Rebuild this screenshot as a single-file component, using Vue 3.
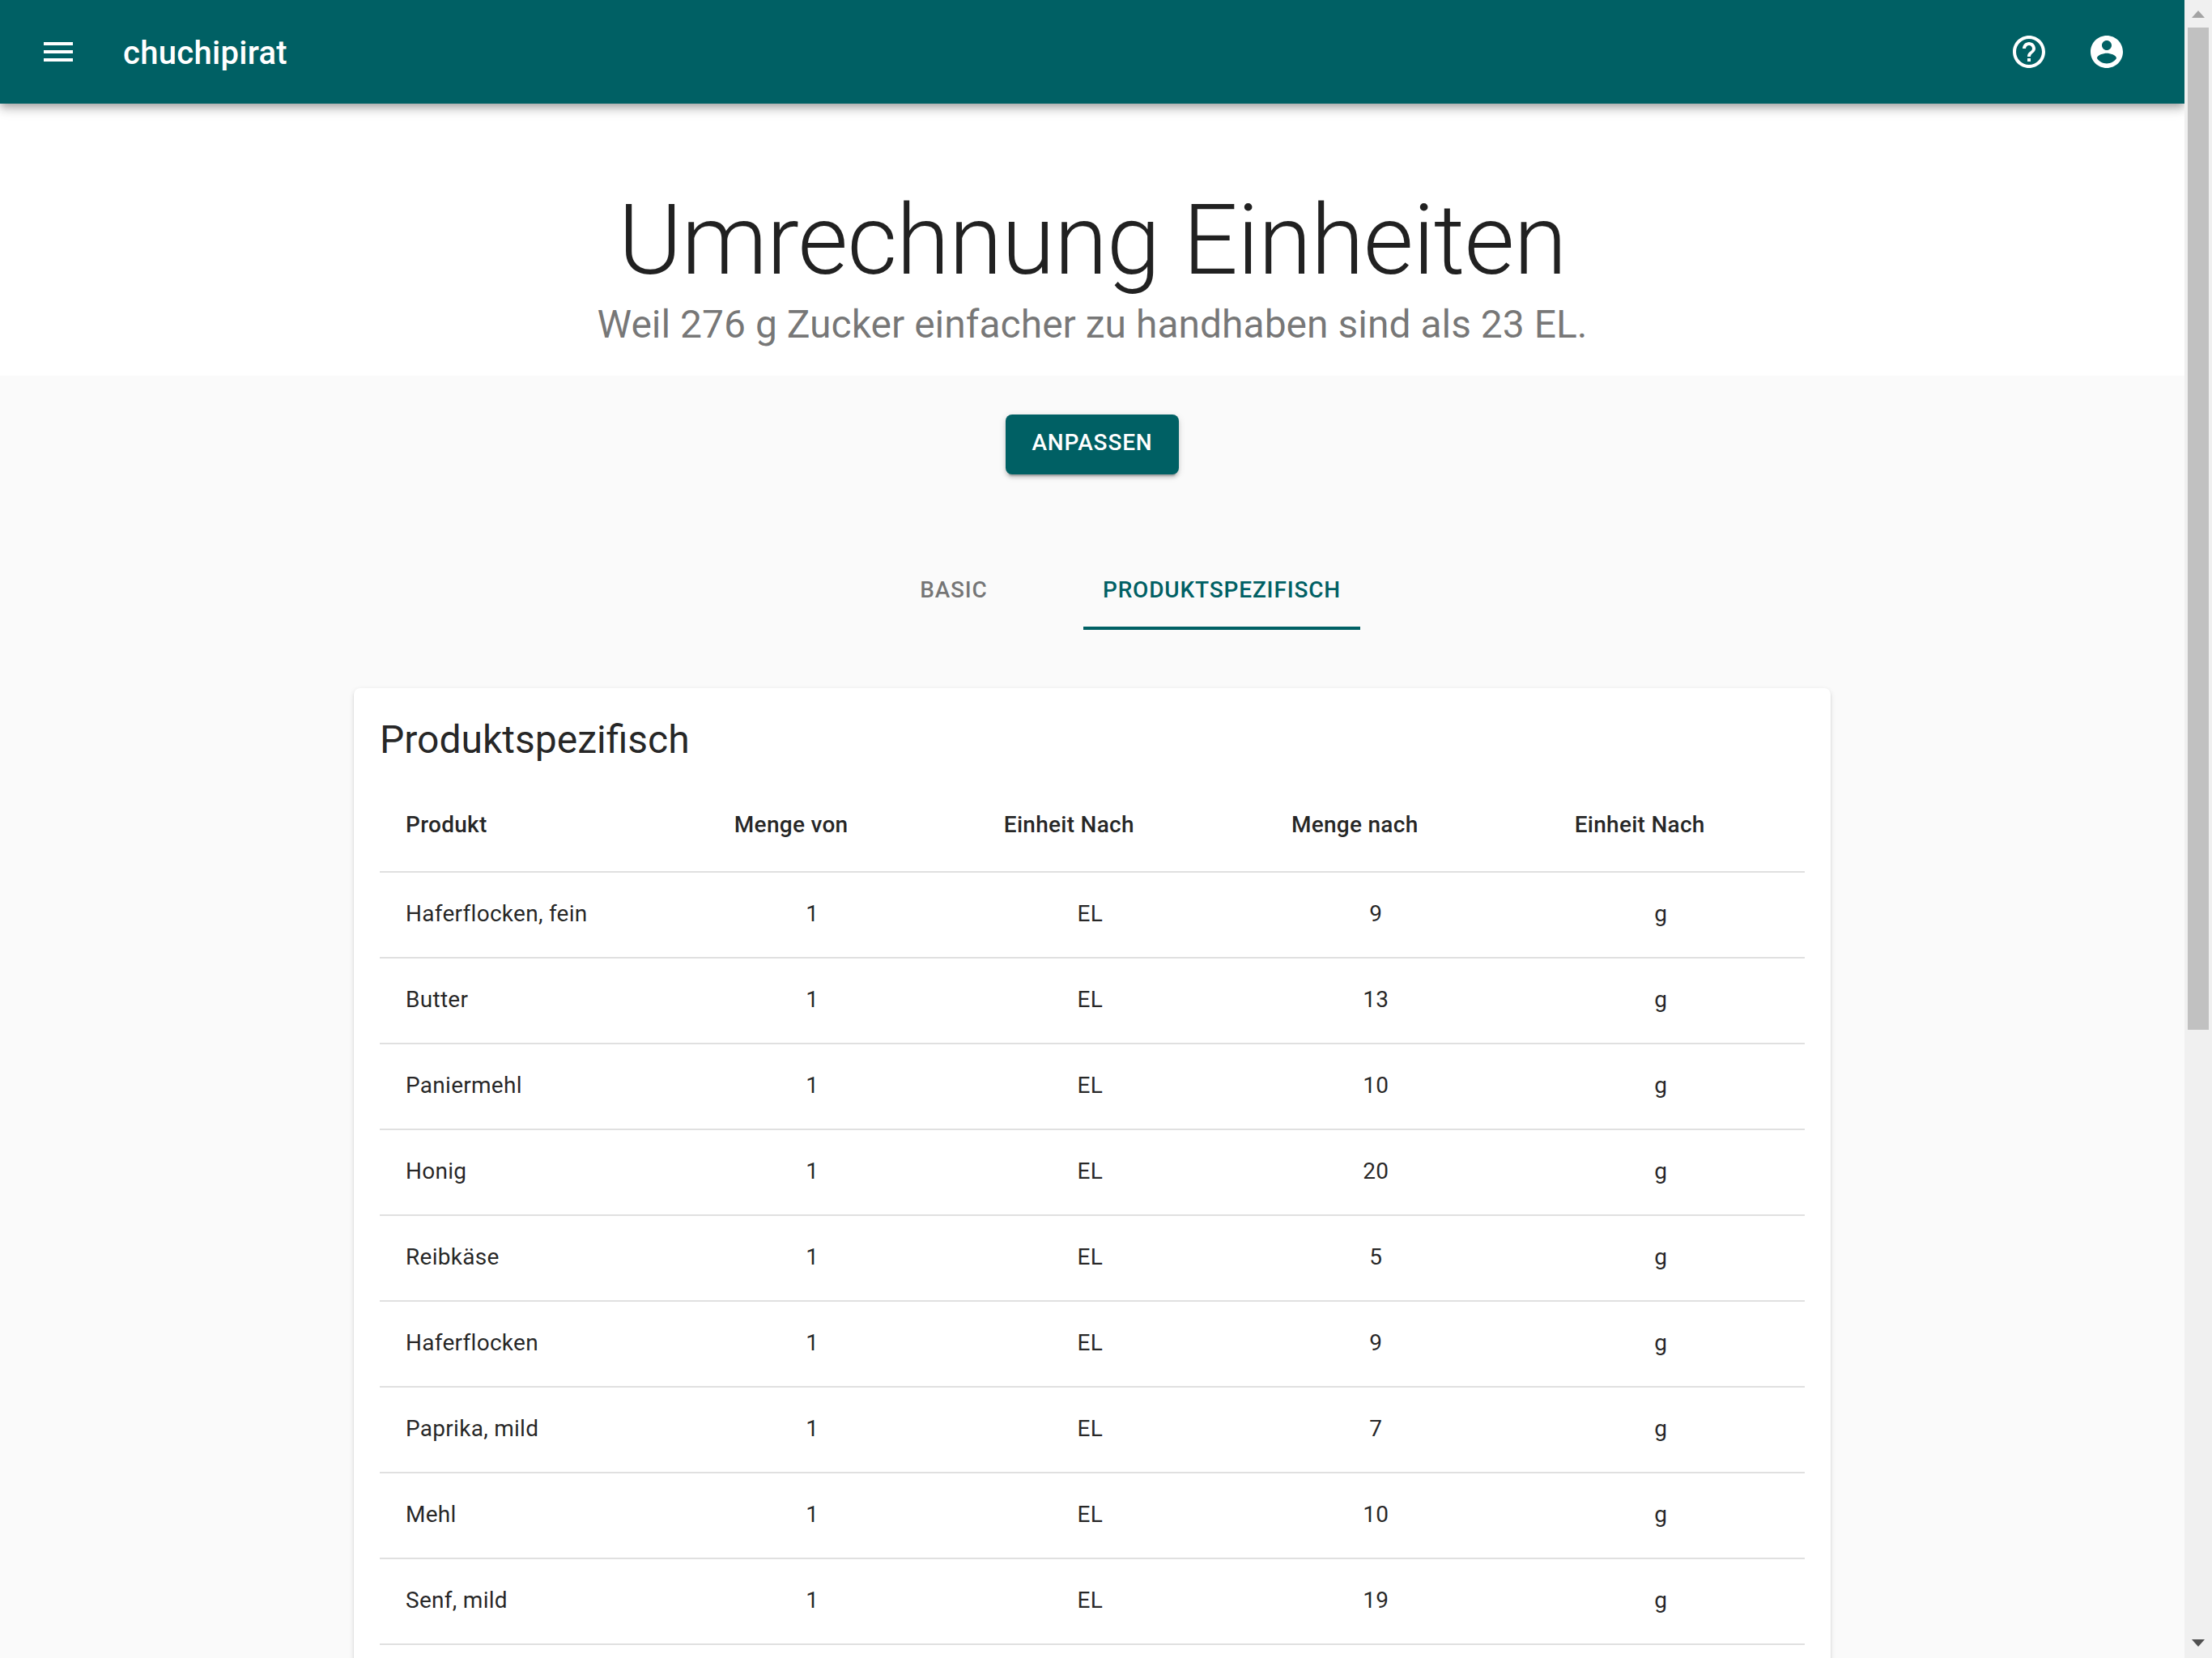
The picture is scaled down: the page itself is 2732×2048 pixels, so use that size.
<script setup>
import { ref } from 'vue'

const tabs = ['Basic', 'Produktspezifisch']
const activeTab = ref('Produktspezifisch')

const columns = ['Produkt', 'Menge von', 'Einheit Nach', 'Menge nach', 'Einheit Nach']

const rows = [
  ['Haferflocken, fein', 1, 'EL', 9, 'g'],
  ['Butter', 1, 'EL', 13, 'g'],
  ['Paniermehl', 1, 'EL', 10, 'g'],
  ['Honig', 1, 'EL', 20, 'g'],
  ['Reibkäse', 1, 'EL', 5, 'g'],
  ['Haferflocken', 1, 'EL', 9, 'g'],
  ['Paprika, mild', 1, 'EL', 7, 'g'],
  ['Mehl', 1, 'EL', 10, 'g'],
  ['Senf, mild', 1, 'EL', 19, 'g'],
]
</script>

<template>
  <div class="window">
    <div class="page">
      <header class="app-bar">
        <button class="icon-button" type="button" aria-label="Menü">
          <svg class="icon" viewBox="0 0 24 24"><path d="M3 18h18v-2H3v2zm0-5h18v-2H3v2zm0-7v2h18V6H3z" /></svg>
        </button>
        <span class="brand">chuchipirat</span>
        <button class="icon-button" type="button" aria-label="Hilfe">
          <svg class="icon" viewBox="0 0 24 24"><path d="M11 18h2v-2h-2v2zm1-16C6.48 2 2 6.48 2 12s4.480 10 10 10 10-4.480 10-10S17.520 2 12 2zm0 18c-4.410 0-8-3.590-8-8s3.590-8 8-8 8 3.590 8 8-3.590 8-8 8zm0-14c-2.210 0-4 1.790-4 4h2c0-1.100.9-2 2-2s2 .9 2 2c0 2-3 1.750-3 5h2c0-2.250 3-2.500 3-5 0-2.210-1.790-4-4-4z" /></svg>
        </button>
        <button class="icon-button" type="button" aria-label="Konto">
          <svg class="icon" viewBox="0 0 24 24"><path d="M12 2C6.480 2 2 6.480 2 12s4.480 10 10 10 10-4.480 10-10S17.520 2 12 2zm0 3c1.660 0 3 1.340 3 3s-1.340 3-3 3-3-1.340-3-3 1.340-3 3-3zm0 14.200c-2.500 0-4.710-1.280-6-3.220.03-1.990 4-3.080 6-3.080 1.990 0 5.970 1.090 6 3.080-1.290 1.940-3.500 3.220-6 3.220z" /></svg>
        </button>
      </header>

      <section class="hero">
        <h1 class="hero-title">Umrechnung Einheiten</h1>
        <p class="hero-subtitle">Weil 276 g Zucker einfacher zu handhaben sind als 23 EL.</p>
      </section>

      <main class="container">
        <button class="primary-button" type="button">Anpassen</button>

        <div class="tabs" role="tablist">
          <button
            v-for="tab in tabs"
            :key="tab"
            type="button"
            role="tab"
            class="tab"
            :class="{ active: tab === activeTab }"
            :aria-selected="tab === activeTab"
            @click="activeTab = tab"
          >
            {{ tab }}
          </button>
        </div>

        <section class="card">
          <h2 class="card-title">Produktspezifisch</h2>
          <table class="units">
            <colgroup>
              <col class="col-product" />
              <col class="col-from" />
              <col class="col-unit" />
              <col class="col-to" />
              <col />
            </colgroup>
            <thead>
              <tr>
                <th v-for="(column, index) in columns" :key="index" scope="col">
                  <span class="sort-label">{{ column }}</span>
                </th>
              </tr>
            </thead>
            <tbody>
              <tr v-for="row in rows" :key="row[0]">
                <td v-for="(value, index) in row" :key="index">{{ value }}</td>
              </tr>
            </tbody>
          </table>
        </section>
      </main>
    </div>

    <div class="scrollbar" aria-hidden="true">
      <svg class="arrow arrow-up" viewBox="0 0 34 34"><path d="M17 13l8 9H9z" /></svg>
      <div class="track"><div class="thumb"></div></div>
      <svg class="arrow arrow-down" viewBox="0 0 34 34"><path d="M9 11h16l-8 9z" /></svg>
    </div>
  </div>
</template>

<style>
body {
  background: #fafafa;
}
</style>

<style scoped>
.window {
  display: flex;
  height: 100vh;
  overflow: hidden;
  background: #fafafa;
  color: rgba(0, 0, 0, 0.87);
  font-family: Roboto, "Liberation Sans", sans-serif;
}

.page {
  flex: 1;
  min-width: 0;
  overflow: hidden;
}

button {
  border: 0;
  margin: 0;
  font-family: inherit;
  cursor: pointer;
}

.app-bar {
  position: relative;
  display: flex;
  align-items: center;
  height: 128px;
  padding: 0 48px 0 24px;
  box-sizing: border-box;
  background: #006064;
  color: #fff;
  box-shadow:
    0 4px 8px -2px rgba(0, 0, 0, 0.2),
    0 8px 10px 0 rgba(0, 0, 0, 0.14),
    0 2px 20px 0 rgba(0, 0, 0, 0.12);
}

.icon-button {
  padding: 24px;
  background: transparent;
  color: inherit;
}

.icon {
  display: block;
  width: 48px;
  height: 48px;
  fill: currentColor;
}

.brand {
  flex: 1;
  margin-left: 32px;
  padding-top: 4px;
  font-size: 40px;
  font-weight: 500;
  line-height: 64px;
  letter-spacing: 0.0075em;
}

.hero {
  padding: 96px 48px 32px;
  background: #fff;
  text-align: center;
}

.hero-title {
  margin: 0;
  font-size: 120px;
  font-weight: 300;
  line-height: 146px;
  letter-spacing: -1px;
}

.hero-subtitle {
  margin: 0;
  color: rgba(0, 0, 0, 0.54);
  font-size: 48px;
  line-height: 62px;
}

.container {
  display: flex;
  flex-direction: column;
  align-items: center;
  max-width: 1920px;
  margin: 0 auto;
  padding: 48px;
  box-sizing: border-box;
}

.primary-button {
  padding: 11px 32px 15px;
  border-radius: 8px;
  background: #006064;
  color: #fff;
  font-size: 28px;
  font-weight: 500;
  line-height: 48px;
  letter-spacing: 0.03em;
  text-transform: uppercase;
  box-shadow:
    0 6px 2px -4px rgba(0, 0, 0, 0.2),
    0 4px 4px 0 rgba(0, 0, 0, 0.14),
    0 2px 10px 0 rgba(0, 0, 0, 0.12);
}

.tabs {
  display: flex;
  margin-top: 96px;
}

.tab {
  min-width: 320px;
  height: 96px;
  padding: 0 24px;
  border-bottom: 4px solid transparent;
  background: transparent;
  color: rgba(0, 0, 0, 0.54);
  font-size: 28px;
  font-weight: 500;
  letter-spacing: 0.03em;
  text-transform: uppercase;
}

.tab.active {
  border-bottom-color: #006064;
  color: #006064;
}

.card {
  width: 100%;
  margin-top: 72px;
  padding: 32px;
  box-sizing: border-box;
  border-radius: 8px;
  background: #fff;
  box-shadow:
    0 4px 2px -2px rgba(0, 0, 0, 0.2),
    0 2px 2px 0 rgba(0, 0, 0, 0.14),
    0 2px 6px 0 rgba(0, 0, 0, 0.12);
}

.card-title {
  margin: 0 0 18px;
  font-size: 48px;
  font-weight: 400;
  line-height: 64px;
}

.units {
  width: 100%;
  table-layout: fixed;
  border-spacing: 0;
  font-size: 28px;
  letter-spacing: 0.01em;
}

.col-product {
  width: 21%;
}

.col-from {
  width: 18.7%;
}

.col-unit {
  width: 20.3%;
}

.col-to {
  width: 19.8%;
}

.units th,
.units td {
  padding: 31px 32px 33px;
  border-bottom: 2px solid #e0e0e0;
  text-align: center;
}

.units th:first-child,
.units td:first-child {
  text-align: left;
}

.units th {
  font-weight: 500;
  line-height: 48px;
}

.units td {
  line-height: 40px;
}

.sort-label {
  padding-right: 52px;
  white-space: nowrap;
}

.scrollbar {
  display: flex;
  flex-direction: column;
  width: 34px;
  background: #f0f0f0;
}

.arrow {
  width: 34px;
  height: 34px;
}

.arrow-up {
  fill: #a3a3a3;
}

.arrow-down {
  fill: #505050;
}

.track {
  flex: 1;
  padding: 0 4px;
}

.thumb {
  height: 62.5%;
  background: #c1c1c1;
}
</style>
